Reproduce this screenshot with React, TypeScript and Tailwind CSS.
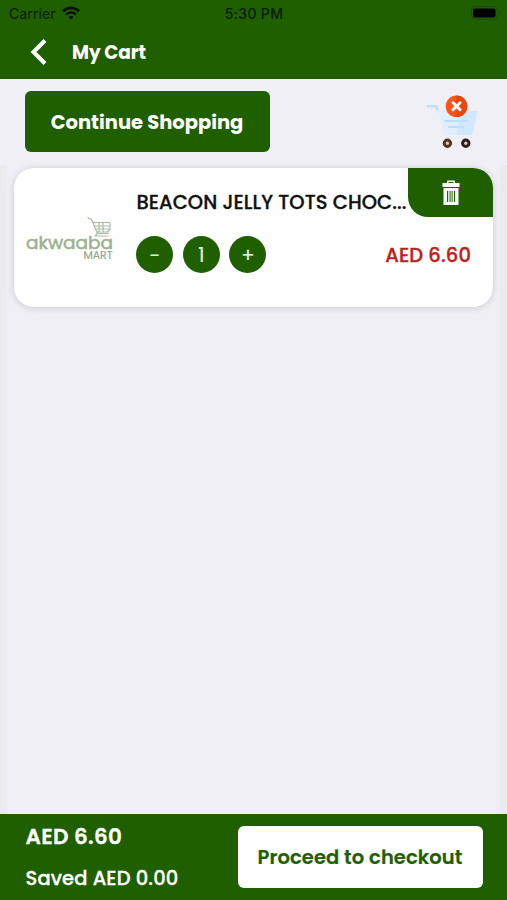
import React from "react";

const poppins =
  "font-['Poppins',Inter,sans-serif] whitespace-nowrap";

function StatusBar() {
  return (
    <div className="grid h-7 grid-cols-3 items-center pb-[2px] pl-[9px] pr-[6px] font-[Inter,sans-serif] text-[14px] text-[#071c00]">
      <div className="flex items-center gap-[6px]">
        <span className="tracking-[0.1px]">Carrier</span>
        <svg width="18" height="14" viewBox="0 0 18 14" className="-mt-[1px]" fill="none" stroke="#041200" strokeWidth="2.6">
          <path d="M1 5.2C5.6.8 12.4.8 17 5.2" />
          <path d="M4.1 8.4c2.9-2.6 6.9-2.6 9.8 0" />
          <path d="M9 13.6 6.4 11c1.5-1.3 3.7-1.3 5.2 0Z" fill="#041200" stroke="none" />
        </svg>
      </div>
      <span className="-ml-[2px] text-center font-medium tracking-[0.35px]">5:30 PM</span>
      <svg width="30" height="14" viewBox="0 0 30 14" className="justify-self-end">
        <rect x=".5" y=".5" width="26" height="13" rx="4" fill="none" stroke="#194e00" />
        <rect x="2" y="2.500" width="22.500" height="9" rx="2" fill="#000" />
        <path d="M28 5c1.6.6 1.6 3.4 0 4Z" fill="#194e00" />
      </svg>
    </div>
  );
}

function EmptyCartIcon() {
  return (
    <svg width="56" height="56" viewBox="0 0 56 56">
      <path d="M2 12.200h9l1.500 4.500" fill="none" stroke="#bfdffa" strokeWidth="2.600" strokeLinejoin="round" />
      <path d="M13.500 17h39.500L47 41H19Z" fill="#dfeffd" />
      <path d="M34 17h19L47 41H32Z" fill="#d2e8fc" />
      <path d="M20 27h22M24 33h14" stroke="#bfdcf6" strokeWidth="2" strokeLinecap="round" />
      <circle cx="31.500" cy="12.300" r="10.800" fill="#fa5418" />
      <path d="M31.500 1.500a10.800 10.800 0 0 1 0 21.600Z" fill="#e94610" />
      <path d="m28 8.800 7 7m0-7-7 7" stroke="#fff" strokeWidth="3" strokeLinecap="round" />
      <circle cx="22.400" cy="49.300" r="3.200" fill="#d9c8bd" stroke="#54341f" strokeWidth="3" />
      <circle cx="40.800" cy="49.300" r="3.200" fill="#ded3d3" stroke="#2e1c1c" strokeWidth="3" />
    </svg>
  );
}

function BrandLogo() {
  return (
    <svg width="98" height="60" viewBox="0 0 98 60">
      <g fill="none" stroke="#a9bba5" strokeWidth="1.200" strokeLinejoin="round" strokeLinecap="round">
        <path d="M66 1.500 69.500 3.500l6 14h11" />
        <path d="M71 6.500h17v7L85.500 16H75M72.500 10H87M74 13h13M77 7v9M81 7v9" />
        <path d="M75.500 17.500 73 20h13" />
      </g>
      <g transform="translate(4 32.800) scale(1.130 1)">
        <text x="0" y="0" textLength="77" lengthAdjust="spacingAndGlyphs" fontSize="18" fontWeight="400" fill="#9db18f" stroke="#9db18f" strokeWidth=".5" className={poppins}>
          akwaaba
        </text>
      </g>
      <text x="61.500" y="42.500" textLength="29" lengthAdjust="spacingAndGlyphs" fontSize="10" fontWeight="400" fill="#98a894" stroke="#98a894" strokeWidth=".2" className={poppins}>
        MART
      </text>
    </svg>
  );
}

function TrashIcon() {
  return (
    <svg width="18" height="26" viewBox="0 0 18 26" fill="#fff">
      <path d="M5 3V1.500Q5 .5 6 .5h6q1 0 1 1V3h4.500v4H.5V3Zm1.500 0h5V2h-5Z" />
      <path fillRule="evenodd" d="M1.500 8h15v17h-15ZM5 11v11h1.200V11Zm2.600 0v11h1V11Zm2 0v11h1V11Zm2.300 0v11h1.200V11Z" />
    </svg>
  );
}

function RoundButton({ children }: { children: React.ReactNode }) {
  return (
    <button className="flex size-[37px] items-center justify-center rounded-full bg-[#205f00] pt-px text-[19.500px] leading-none text-[#e4efdf] [-webkit-text-stroke:0.2px_#e4efdf]">
      {children}
    </button>
  );
}

export default function App() {
  return (
    <div className={`flex h-[900px] w-[507px] flex-col overflow-hidden bg-[#f0eff5] ${poppins}`}>
      <header className="h-[79px] shrink-0 bg-[#205f00]">
        <StatusBar />
        <div className="flex h-[48px] items-center pl-[30px]">
          <svg width="18" height="26" viewBox="0 0 18 26" fill="none" stroke="#fff" strokeWidth="4">
            <path d="M15 1.500 3.500 13 15 24.500" />
          </svg>
          <h1 className="ml-[24px] pt-[2px] text-[18.500px] font-bold tracking-[-0.1px] text-white">My Cart</h1>
        </div>
      </header>

      <div className="flex h-[86px] shrink-0 items-start justify-between pl-[25px] pr-[26px] pt-[12px]">
        <button className="h-[61px] w-[245px] rounded-[6px] bg-[#205f00] pr-[1px] pt-[2px] text-[19.500px] font-bold text-white">
          Continue Shopping
        </button>
        <div className="mt-[3px]">
          <EmptyCartIcon />
        </div>
      </div>

      <main className="flex-1 border-x-[7px] border-[#ebebee] px-[7px] pt-[3px]">
        <article className="flex h-[139px] overflow-hidden rounded-[20px] bg-white shadow-[0_1px_7px_rgba(0,0,0,0.16)]">
          <div className="w-[122.400px] shrink-0 pl-[8px] pt-[48px]">
            <BrandLogo />
          </div>
          <div className="flex min-w-0 flex-1 flex-col">
            <div className="flex h-[49px] justify-between">
              <h2 className="pt-[19.500px] text-[19.500px] font-medium leading-[29px] tracking-[0.07px] text-[#111] [-webkit-text-stroke:0.3px_#111]">
                BEACON JELLY TOTS CHOC...
              </h2>
              <button className="flex w-[85px] shrink-0 items-center justify-center rounded-bl-[20px] bg-[#205f00]">
                <TrashIcon />
              </button>
            </div>
            <div className="mt-[19.300px] flex items-center justify-between pr-[22px]">
              <div className="flex gap-[9.500px]">
                <RoundButton>-</RoundButton>
                <RoundButton>1</RoundButton>
                <RoundButton>+</RoundButton>
              </div>
              <span className="pt-[2px] text-[19.500px] font-medium tracking-[0.1px] text-[#c21f1f] [-webkit-text-stroke:0.4px_#c21f1f]">AED 6.60</span>
            </div>
          </div>
        </article>
      </main>

      <footer className="flex h-[86px] shrink-0 justify-between bg-[#205f00] pl-[25.500px] pr-[24px] text-white">
        <div className="flex flex-col pt-[9px]">
          <span className="text-[21.500px] font-semibold leading-[28px] tracking-[0.3px] [-webkit-text-stroke:0.3px_#fff]">AED 6.60</span>
          <span className="mt-[14px] text-[19.500px] font-medium leading-[28px] tracking-[0.1px] [-webkit-text-stroke:0.3px_#fff]">Saved AED 0.00</span>
        </div>
        <button className="mt-[12px] h-[62px] w-[245px] rounded-[6px] bg-white pr-[1px] pt-[2px] text-[19.500px] font-semibold tracking-[0.1px] text-[#205f00] [-webkit-text-stroke:0.2px_#205f00]">
          Proceed to checkout
        </button>
      </footer>
    </div>
  );
}
